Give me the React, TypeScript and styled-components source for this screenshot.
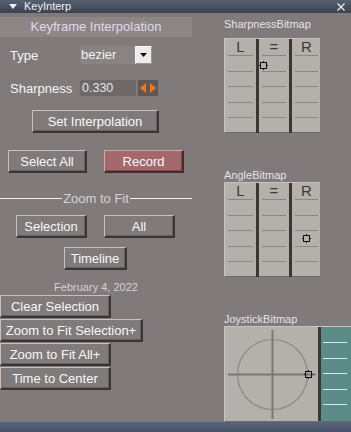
import { Fragment } from 'react'
import styled, { createGlobalStyle } from 'styled-components'

const Global = createGlobalStyle`
  html, body {
    margin: 0;
    padding: 0;
    background: #807a7a;
  }
  * {
    box-sizing: border-box;
  }
`

const Window = styled.div`
  width: 351px;
  height: 432px;
  overflow: hidden;
  display: flex;
  flex-direction: column;
  background: #807a7a;
  font-family: 'Liberation Sans', Arial, sans-serif;
  color: #f4f4f4;
`

const TitleBar = styled.div`
  height: 13px;
  flex: none;
  display: flex;
  align-items: center;
  padding: 0 6px 0 9px;
  background: linear-gradient(#56606e, #3b4350);
  font-size: 11px;
  color: #f2f2f2;
`

const TitleText = styled.span`
  flex: 1;
  margin-left: 7px;
  line-height: 13px;
`

const Body = styled.div`
  flex: 1;
  display: flex;
  min-height: 0;
`

const BottomBar = styled.div`
  height: 10px;
  flex: none;
  background: linear-gradient(#56647c, #46536a);
`

const LeftCol = styled.div`
  width: 192px;
  flex: none;
  display: flex;
  flex-direction: column;
  align-items: flex-start;
`

const RightCol = styled.div`
  margin-left: 32px;
  display: flex;
  flex-direction: column;
  flex: 1;
  min-width: 0;
`

const Header = styled.div`
  margin-top: 4px;
  width: 192px;
  height: 20px;
  background: #8e8686;
  color: #dcdcea;
  font-size: 13px;
  line-height: 20px;
  text-align: center;
`

const Row = styled.div<{ $top: number; $indent?: number; $gap?: number }>`
  display: flex;
  align-items: center;
  margin-top: ${p => p.$top}px;
  padding-left: ${p => p.$indent ?? 0}px;
  gap: ${p => p.$gap ?? 0}px;
`

const Label = styled.span`
  width: 80px;
  padding-left: 10px;
  font-size: 13px;
  color: #f6f6f6;
`

const ComboText = styled.div`
  width: 55px;
  height: 18px;
  background: #8a8383;
  font-size: 13px;
  line-height: 18px;
  padding-left: 1px;
  color: #f2f2f2;
`

const ComboButton = styled.div`
  width: 17px;
  height: 18px;
  background: #ececec;
  border: 1px solid #f8f8f8;
  border-right-color: #9a9494;
  border-bottom-color: #9a9494;
  display: flex;
  align-items: center;
  justify-content: center;
`

const Field = styled.div`
  width: 56px;
  height: 16px;
  background: #6e6868;
  font-size: 12.5px;
  line-height: 16px;
  padding-left: 2px;
  color: #e6e6e6;
`

const Spinner = styled.div`
  margin-left: 2px;
  width: 20px;
  height: 16px;
  background: #5f5858;
  display: flex;
  align-items: center;
  justify-content: center;
`

const Btn = styled.button<{ $w: number; $red?: boolean }>`
  width: ${p => p.$w}px;
  height: 23px;
  padding: 0;
  background: ${p => (p.$red ? '#a5696d' : '#807a7a')};
  color: #f8f8f8;
  font-family: 'Liberation Sans', Arial, sans-serif;
  font-size: 13px;
  border-style: solid;
  border-width: 1px 2px 2px 1px;
  border-color: ${p => (p.$red ? '#d8a4a8 #4a2a2c #4a2a2c #d8a4a8' : '#c6c0c0 #3a3535 #3a3535 #c6c0c0')};
  box-shadow: inset -1px -1px 0 ${p => (p.$red ? '#7c4a4e' : '#665f5f')};
  white-space: nowrap;
`

const Separator = styled.div`
  margin-top: 18px;
  width: 192px;
  display: flex;
  align-items: center;
  gap: 1px;
  font-size: 13px;
  color: #d6d2d6;

  &::before,
  &::after {
    content: '';
    flex: 1;
    height: 1px;
    background: #f0f0f0;
  }
`

const DateText = styled.div`
  margin-top: 10px;
  width: 192px;
  text-align: center;
  font-size: 11px;
  line-height: 14px;
  color: #d4d0d8;
`

const Stack = styled.div`
  margin-top: 1px;
  display: flex;
  flex-direction: column;
  gap: 1px;
`

const BitmapLabel = styled.div<{ $top: number; $bottom?: number }>`
  margin-top: ${p => p.$top}px;
  margin-bottom: ${p => p.$bottom ?? 0}px;
  height: 14px;
  font-size: 11px;
  line-height: 14px;
  color: #e4e2ee;
`

const Bitmap = styled.div`
  position: relative;
  width: 96px;
  height: 95px;
  display: grid;
  grid-template-columns: 31px 3px 30px 3px 29px;
  background: #b4b1ad;
  border-top: 1px solid #c8c5c1;
  border-left: 1px solid #c8c5c1;
  border-bottom: 1px solid #6e6a66;
`

const Lane = styled.div`
  display: flex;
  flex-direction: column;
`

const LaneHead = styled.div`
  height: 16px;
  text-align: center;
  font-size: 15px;
  line-height: 16px;
  color: #3a3838;
`

const LaneCell = styled.div`
  height: 15.5px;
  margin: 0 3px;
  border-top: 1px solid #8b8783;
`

const Divider = styled.div`
  width: 3px;
  background: #3b3737;
`

const Marker = styled.svg`
  position: absolute;
  width: 9px;
  height: 9px;
`

const Joystick = styled.div`
  width: 140px;
  height: 96px;
  display: flex;
  border-top: 1px solid #c8c5c1;
  border-left: 1px solid #c8c5c1;
  border-bottom: 1px solid #6e6a66;
`

const Pad = styled.div`
  position: relative;
  width: 93px;
  background: #b4b1ad;
`

const Teal = styled.div`
  flex: 1;
  background: #5b8c87;
  display: flex;
  flex-direction: column;
  padding-top: 15px;
  gap: 14.5px;
`

const TealLine = styled.div`
  height: 1px;
  width: 24px;
  margin-left: 2px;
  background: #d4ecec;
`

const Cross = ({ x, y }: { x: number; y: number }) => (
  <Marker viewBox="0 0 9 9" style={{ left: x - 4.5, top: y - 4.5 }}>
    <rect x="1.5" y="1.5" width="6" height="6" fill="none" stroke="#111" strokeWidth="1" />
    <path d="M4.5 0v2M4.5 7v2M0 4.5h2M7 4.5h2" stroke="#111" strokeWidth="1" />
  </Marker>
)

const lanes = ['L', '=', 'R']

const BitmapGrid = ({ mark }: { mark: { x: number; y: number } }) => (
  <Bitmap>
    {lanes.map((l, i) => (
      <Fragment key={l}>
        {i > 0 && <Divider />}
        <Lane>
          <LaneHead>{l}</LaneHead>
          {[0, 1, 2, 3, 4].map(n => (
            <LaneCell key={n} />
          ))}
        </Lane>
      </Fragment>
    ))}
    <Cross x={mark.x} y={mark.y} />
  </Bitmap>
)

export default function App() {
  return (
    <Window>
      <Global />
      <TitleBar>
        <svg width="8" height="5" viewBox="0 0 8 5">
          <path d="M0 0h8L4 5z" fill="#f4f4f4" />
        </svg>
        <TitleText>KeyInterp</TitleText>
        <svg width="8" height="8" viewBox="0 0 8 8">
          <path d="M0.5 0.5l7 7M7.5 0.5l-7 7" stroke="#f0f0f0" strokeWidth="1.2" />
        </svg>
      </TitleBar>
      <Body>
        <LeftCol>
          <Header>Keyframe Interpolation</Header>
          <Row $top={9}>
            <Label>Type</Label>
            <ComboText>bezier</ComboText>
            <ComboButton>
              <svg width="7" height="4" viewBox="0 0 7 4">
                <path d="M0 0h7L3.5 4z" fill="#111" />
              </svg>
            </ComboButton>
          </Row>
          <Row $top={16}>
            <Label>Sharpness</Label>
            <Field>0.330</Field>
            <Spinner>
              <svg width="18" height="10" viewBox="0 0 18 10">
                <path d="M1 5L7 0v10z" fill="#f07a1c" />
                <path d="M17 5L11 0v10z" fill="#f07a1c" />
              </svg>
            </Spinner>
          </Row>
          <Row $top={14} $indent={32}>
            <Btn $w={127}>Set Interpolation</Btn>
          </Row>
          <Row $top={17} $indent={8} $gap={17}>
            <Btn $w={79}>Select All</Btn>
            <Btn $w={80} $red>
              Record
            </Btn>
          </Row>
          <Separator>Zoom to Fit</Separator>
          <Row $top={9} $indent={16} $gap={17}>
            <Btn $w={71}>Selection</Btn>
            <Btn $w={71}>All</Btn>
          </Row>
          <Row $top={9} $indent={64}>
            <Btn $w={63}>Timeline</Btn>
          </Row>
          <DateText>February 4, 2022</DateText>
          <Stack>
            <Btn $w={111}>Clear Selection</Btn>
            <Btn $w={143}>Zoom to Fit Selection+</Btn>
            <Btn $w={111}>Zoom to Fit All+</Btn>
            <Btn $w={111}>Time to Center</Btn>
          </Stack>
        </LeftCol>
        <RightCol>
          <BitmapLabel $top={4} $bottom={7}>SharpnessBitmap</BitmapLabel>
          <BitmapGrid mark={{ x: 38, y: 26 }} />
          <BitmapLabel $top={35}>AngleBitmap</BitmapLabel>
          <BitmapGrid mark={{ x: 81, y: 55 }} />
          <BitmapLabel $top={35}>JoystickBitmap</BitmapLabel>
          <Joystick>
            <Pad>
              <svg width="93" height="95" viewBox="0 0 93 95">
                <circle cx="47.5" cy="47.5" r="35" fill="none" stroke="#8d8985" strokeWidth="1.2" />
                <path d="M47.5 3v89M3 47.5h88" stroke="#7c7874" strokeWidth="2" />
              </svg>
              <Cross x={83} y={47} />
            </Pad>
            <Divider />
            <Teal>
              {[0, 1, 2, 3, 4].map(n => (
                <TealLine key={n} />
              ))}
            </Teal>
          </Joystick>
        </RightCol>
      </Body>
      <BottomBar />
    </Window>
  )
}
